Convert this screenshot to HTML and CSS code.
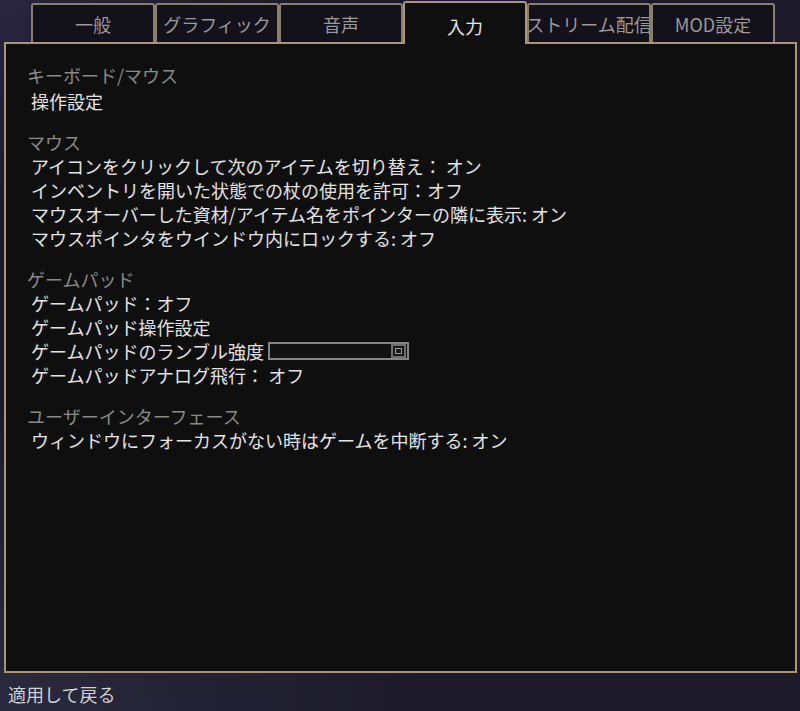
FILE: index.html
```html
<!DOCTYPE html>
<html>

<head>
    <meta name="viewport" content="width=device-width, initial-scale=1.0">
    <title>設定 - 入力</title>
    <link rel="stylesheet" href="styles.css">
</head>

<body>
    <div class="screen">
        <div class="tabs">
            <div class="tab"><span>一般</span></div>
            <div class="tab"><span>グラフィック</span></div>
            <div class="tab"><span>音声</span></div>
            <div class="tab active"><span>入力</span></div>
            <div class="tab"><span>ストリーム配信</span></div>
            <div class="tab"><span>MOD設定</span></div>
        </div>

        <div class="panel">
            <div class="section">
                <div class="section-title">キーボード/マウス</div>
                <div class="option first">操作設定</div>
            </div>

            <div class="section">
                <div class="section-title">マウス</div>
                <div class="option">アイコンをクリックして次のアイテムを切り替え： オン</div>
                <div class="option">インベントリを開いた状態での杖の使用を許可：オフ</div>
                <div class="option">マウスオーバーした資材/アイテム名をポインターの隣に表示: オン</div>
                <div class="option">マウスポインタをウインドウ内にロックする: オフ</div>
            </div>

            <div class="section">
                <div class="section-title">ゲームパッド</div>
                <div class="option">ゲームパッド：オフ</div>
                <div class="option">ゲームパッド操作設定</div>
                <div class="option">ゲームパッドのランブル強度<span class="slider"><span class="knob"></span></span></div>
                <div class="option">ゲームパッドアナログ飛行： オフ</div>
            </div>

            <div class="section">
                <div class="section-title">ユーザーインターフェース</div>
                <div class="option">ウィンドウにフォーカスがない時はゲームを中断する: オン</div>
            </div>
        </div>

        <div class="footer">適用して戻る</div>
    </div>
</body>

</html>
```

FILE: styles.css
```css
body {
    margin: 0;
    padding: 0;
    font-family: "Noto Sans CJK JP", "Noto Sans", sans-serif;
    background: #1c1a2a;
}

.screen {
    width: 800px;
    height: 711px;
    overflow: hidden;
    background:
        radial-gradient(ellipse 420px 300px at 0% 100%, #2a2a3e 0%, rgba(42, 42, 62, 0) 100%),
        radial-gradient(ellipse 300px 200px at 0% 0%, #2a2540 0%, rgba(42, 37, 64, 0) 100%),
        #1c1a2a;
}

/* tab row */
.tabs {
    display: flex;
    align-items: flex-end;
    height: 42px;
    padding-left: 31px;
}

.tab {
    width: 124px;
    height: 39px;
    box-sizing: border-box;
    border: 2px solid #8a7f6c;
    border-bottom: none;
    border-radius: 3px 3px 0 0;
    background: #131119;
    color: #9a9a9a;
    font-size: 18px;
    display: flex;
    justify-content: center;
    align-items: center;
    overflow: hidden;
    white-space: nowrap;
}

.tab span {
    flex-shrink: 0;
}

.tab.active {
    height: 43px;
    margin-bottom: -2px;
    position: relative;
    z-index: 1;
    background: #0f0f0f;
    border-color: #a8967a;
    color: #e6e6e6;
    padding-top: 4px;
}

/* main panel */
.panel {
    margin-left: 4px;
    width: 793px;
    height: 631px;
    box-sizing: border-box;
    border: 2px solid #a8967a;
    background: #0f0f0f;
    padding: 19px 21px;
    font-size: 18px;
    line-height: 24px;
}

.section {
    margin-bottom: 17px;
}

.section-title {
    color: #8a8a8a;
}

.option {
    color: #e4e4e4;
    padding-left: 4px;
    display: flex;
    align-items: center;
}

.option.first {
    margin-top: 2px;
}

.slider {
    display: inline-flex;
    justify-content: flex-end;
    align-items: center;
    width: 141px;
    height: 18px;
    box-sizing: border-box;
    margin-left: 4px;
    border: 2px solid #858585;
    background: #121212;
    padding-right: 1px;
}

.knob {
    width: 15px;
    height: 14px;
    box-sizing: border-box;
    border: 2px solid #6f6f6f;
    outline: 1px solid #9a9a9a;
    outline-offset: -5px;
    background: #1a1a1a;
}

.footer {
    color: #d2d2d2;
    font-size: 18px;
    padding: 8px 8px 0;
}
```
